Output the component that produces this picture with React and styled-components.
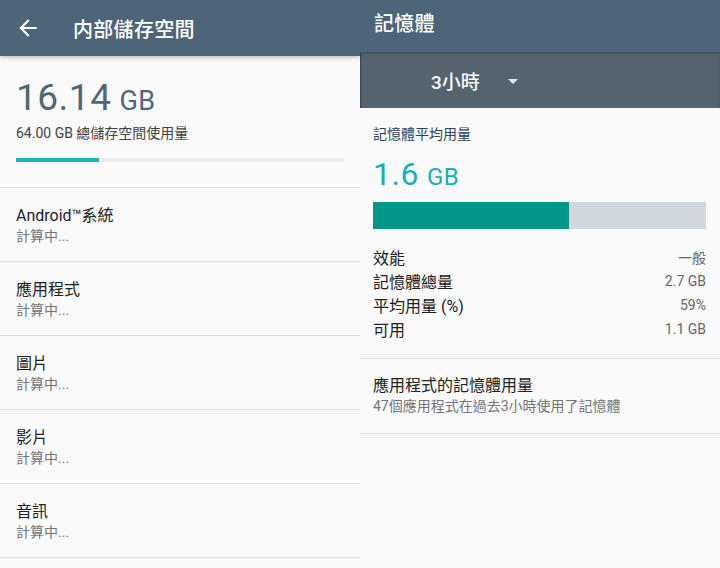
import React from "react";
import styled, { createGlobalStyle } from "styled-components";

const Global = createGlobalStyle`
  html, body { margin: 0; padding: 0; background: #fafafa; }
  body { font-family: Roboto, "Noto Sans CJK TC", sans-serif; -webkit-font-smoothing: antialiased; }
  * { box-sizing: border-box; }
`;

const Page = styled.div`
  display: flex;
  width: 720px;
  height: 568px;
  overflow: hidden;
  background: #fafafa;
`;

const Panel = styled.div`
  position: relative;
  width: 360px;
  height: 568px;
  display: flex;
  flex-direction: column;
  background: #fafafa;
`;

const AppBar = styled.div`
  position: relative;
  z-index: 2;
  flex: none;
  height: ${(p) => p.$h}px;
  display: flex;
  align-items: center;
  padding-left: ${(p) => p.$pl}px;
  padding-bottom: ${(p) => p.$pb || 0}px;
  background: #4e6479;
  box-shadow: ${(p) => (p.$shadow ? "0 2px 4px rgba(0,0,0,0.22)" : "none")};
  color: #fff;
`;

const BackButton = styled.div`
  width: 26px;
  height: 26px;
  margin-right: 32px;
  display: flex;
  svg { display: block; }
`;

const Title = styled.div`
  font-size: 20px;
  font-weight: 500;
  letter-spacing: 0.3px;
  color: #fff;
`;

const Summary = styled.div`
  padding: 20px 16px 25px;
  border-bottom: 1px solid #dedede;
`;

const BigValue = styled.div`
  margin-top: ${(p) => p.$mt || 0}px;
  font-size: ${(p) => p.$size}px;
  line-height: ${(p) => p.$lh}px;
  color: ${(p) => p.$color};
  font-family: Roboto, "Noto Sans CJK TC", sans-serif;
  letter-spacing: 0.5px;
`;

const Unit = styled.span`
  font-size: ${(p) => p.$size}px;
  margin-left: 8px;
`;

const Caption = styled.div`
  font-size: 14px;
  line-height: 20px;
  color: #424242;
`;

const Track = styled.div`
  margin-top: ${(p) => p.$mt}px;
  height: ${(p) => p.$h}px;
  background: ${(p) => p.$bg};
  display: flex;
`;

const Fill = styled.div`
  height: 100%;
  background: ${(p) => p.$color};
`;

const ListRow = styled.div`
  padding: 18px 16px 15px;
  border-bottom: 1px solid #dedede;
`;

const RowTitle = styled.div`
  font-size: 16px;
  line-height: 20px;
  color: #212121;
`;

const RowSub = styled.div`
  font-size: 14px;
  line-height: 20px;
  color: #757575;
`;

const SpinnerBar = styled.div`
  flex: none;
  height: 56px;
  display: flex;
  align-items: center;
  padding-left: 70px;
  background: #55636f;
  border-left: 1px solid #3c4954;
  box-shadow: inset 0 2px 2px rgba(0, 0, 0, 0.18);
  color: #fff;
`;

const SpinnerText = styled.div`
  font-size: 19px;
  font-weight: 500;
  color: #fafafa;
`;

const Caret = styled.div`
  margin-left: 28px;
  margin-top: 2px;
  width: 0;
  height: 0;
  border-left: 5px solid transparent;
  border-right: 5px solid transparent;
  border-top: 5px solid #e6e6e6;
`;

const MemSection = styled.div`
  padding: 16px 14px 17px 13px;
  border-bottom: 1px solid #dedede;
`;

const SectionLabel = styled.div`
  font-size: 14px;
  line-height: 20px;
  color: #2f4358;
`;

const Stats = styled.div`
  margin-top: 16px;
  display: flex;
  flex-direction: column;
`;

const StatRow = styled.div`
  height: 24px;
  display: flex;
  align-items: center;
  justify-content: space-between;
`;

const StatLabel = styled.span`
  font-size: 16px;
  color: #212121;
`;

const StatValue = styled.span`
  font-size: 14px;
  color: #666;
`;

const AppsSection = styled.div`
  padding: 17px 13px 17px;
  border-bottom: 1px solid #dedede;
`;

const ArrowBack = () => (
  <svg width="26" height="26" viewBox="0 0 24 24" fill="#fff">
    <path d="M20 11H7.83l5.59-5.59L12 4l-8 8 8 8 1.41-1.41L7.83 13H20v-2z" />
  </svg>
);

const categories = ["Android™系統", "應用程式", "圖片", "影片", "音訊"];

const stats = [
  ["效能", "一般"],
  ["記憶體總量", "2.7 GB"],
  ["平均用量 (%)", "59%"],
  ["可用", "1.1 GB"],
];

export default function App() {
  const usedPct = (16.14 / 64) * 100;
  const memPct = 59;
  return (
    <>
      <Global />
      <Page>
        <Panel>
          <AppBar $h={56} $pl={15} $shadow>
            <BackButton>
              <ArrowBack />
            </BackButton>
            <Title>内部儲存空間</Title>
          </AppBar>
          <Summary>
            <BigValue $size={37} $lh={44} $color="#4f6776">
              16.14<Unit $size={27}>GB</Unit>
            </BigValue>
            <Caption>64.00 GB 總儲存空間使用量</Caption>
            <Track $mt={15} $h={4} $bg="#ececec">
              <Fill $color="#1fb3bf" style={{ width: `${usedPct}%` }} />
            </Track>
          </Summary>
          {categories.map((c) => (
            <ListRow key={c}>
              <RowTitle>{c}</RowTitle>
              <RowSub>計算中...</RowSub>
            </ListRow>
          ))}
        </Panel>
        <Panel>
          <AppBar $h={52} $pl={14} $pb={8}>
            <Title>記憶體</Title>
          </AppBar>
          <SpinnerBar>
            <SpinnerText>3小時</SpinnerText>
            <Caret />
          </SpinnerBar>
          <MemSection>
            <SectionLabel>記憶體平均用量</SectionLabel>
            <BigValue $mt={10} $size={32} $lh={40} $color="#1aaeb8">
              1.6<Unit $size={24}>GB</Unit>
            </BigValue>
            <Track $mt={5} $h={27} $bg="#cfd8dc">
              <Fill $color="#00968a" style={{ width: `${memPct}%` }} />
            </Track>
            <Stats>
              {stats.map(([k, v]) => (
                <StatRow key={k}>
                  <StatLabel>{k}</StatLabel>
                  <StatValue>{v}</StatValue>
                </StatRow>
              ))}
            </Stats>
          </MemSection>
          <AppsSection>
            <RowTitle>應用程式的記憶體用量</RowTitle>
            <RowSub>47個應用程式在過去3小時使用了記憶體</RowSub>
          </AppsSection>
        </Panel>
      </Page>
    </>
  );
}
